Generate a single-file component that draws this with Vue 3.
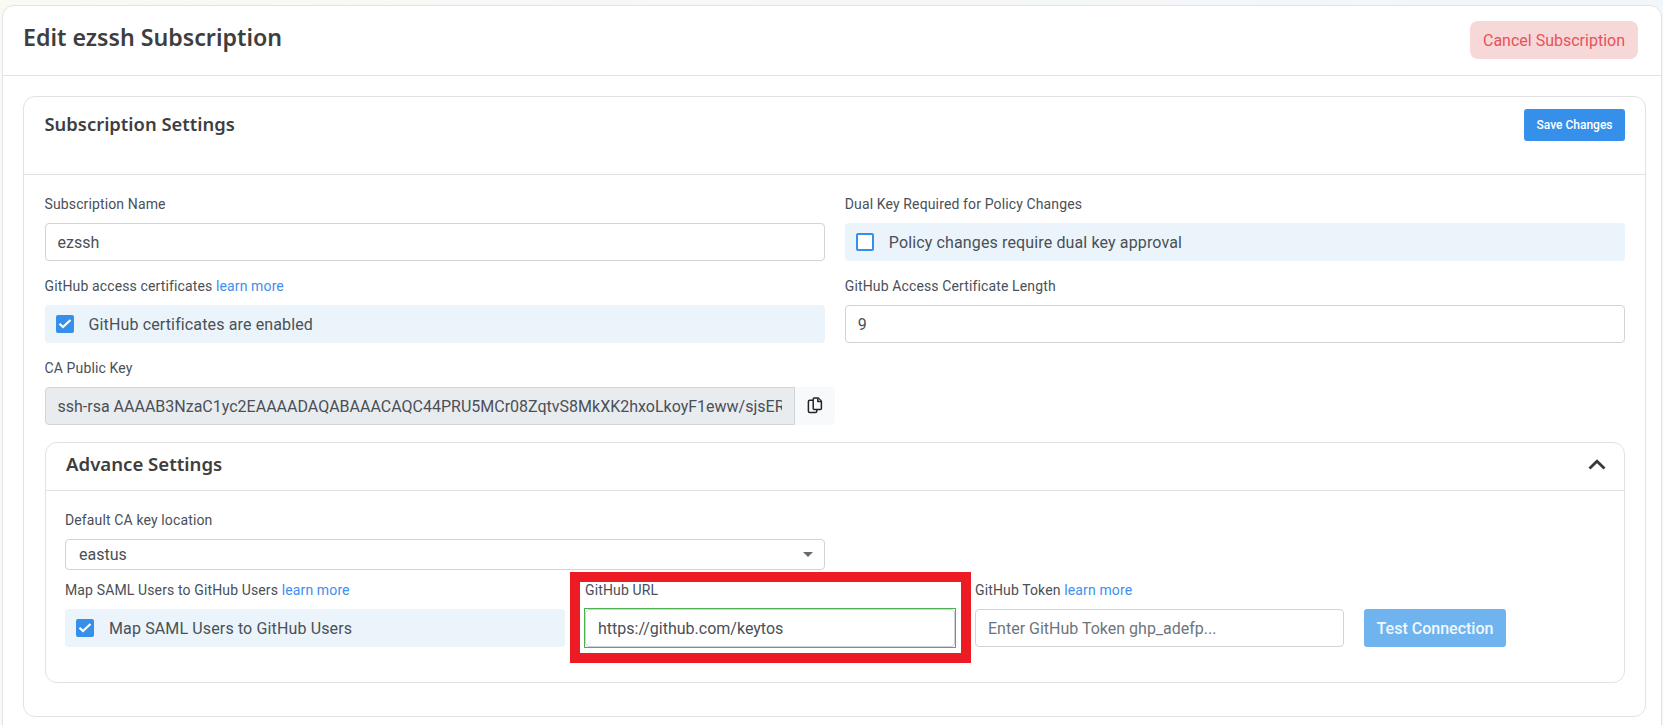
<template>
  <div class="page">
    <div class="outer-card">
      <div class="outer-header">
        <h2>Edit ezssh Subscription</h2>
        <button class="btn-cancel">Cancel Subscription</button>
      </div>
      <div class="outer-body">
        <div class="settings-card">
          <div class="settings-header">
            <h3>Subscription Settings</h3>
            <button class="btn-save">Save Changes</button>
          </div>
          <div class="settings-body">
            <div class="form-grid">
              <div class="field">
                <label>Subscription Name</label>
                <input class="text-input" type="text" :value="subscriptionName" />
              </div>
              <div class="field">
                <label>Dual Key Required for Policy Changes</label>
                <div class="check-panel">
                  <span class="check"></span>
                  <span>Policy changes require dual key approval</span>
                </div>
              </div>
              <div class="field">
                <label>GitHub access certificates <a href="#">learn more</a></label>
                <div class="check-panel">
                  <span class="check checked">
                    <svg viewBox="0 0 18 18"><path d="M3.5 8.8 7 12 14.5 5" /></svg>
                  </span>
                  <span>GitHub certificates are enabled</span>
                </div>
              </div>
              <div class="field">
                <label>GitHub Access Certificate Length</label>
                <input class="text-input" type="text" value="9" />
              </div>
              <div class="field key-field">
                <label>CA Public Key</label>
                <div class="key-group">
                  <input class="text-input key-input" type="text" readonly :value="publicKey" />
                  <button class="btn-copy" aria-label="Copy">
                    <svg viewBox="0 0 16 18" width="16" height="18">
                      <rect x="1.4" y="3.2" width="8.4" height="12.4" rx="1.4" />
                      <path d="M6.2 2c0-.6.4-1 1-1h4l3.2 3.2v7.4c0 .6-.4 1-1 1H7.2c-.6 0-1-.4-1-1z" />
                      <path d="M10.8 1.2v3.4h3.4" />
                    </svg>
                  </button>
                </div>
              </div>
            </div>

            <div class="advance-card">
              <div class="advance-header">
                <h3>Advance Settings</h3>
                <svg class="chevron" viewBox="0 0 18 11" width="18" height="11"><path d="M1.5 9.4 9 2.2 16.5 9.4" /></svg>
              </div>
              <div class="advance-body">
                <div class="location-field">
                  <label>Default CA key location</label>
                  <div class="select-box">
                    <span>eastus</span>
                    <i class="caret"></i>
                  </div>
                </div>
                <div class="github-row">
                  <div class="field">
                    <label>Map SAML Users to GitHub Users <a href="#">learn more</a></label>
                    <div class="check-panel">
                      <span class="check checked">
                        <svg viewBox="0 0 18 18"><path d="M3.5 8.8 7 12 14.5 5" /></svg>
                      </span>
                      <span>Map SAML Users to GitHub Users</span>
                    </div>
                  </div>
                  <div class="field url-field">
                    <label>GitHub URL</label>
                    <div class="valid-wrap">
                      <input class="text-input" type="text" :value="githubUrl" />
                    </div>
                    <div class="red-box"></div>
                  </div>
                  <div class="field">
                    <label>GitHub Token <a href="#">learn more</a></label>
                    <input class="text-input" type="text" placeholder="Enter GitHub Token ghp_adefp..." />
                  </div>
                  <button class="btn-test">Test Connection</button>
                </div>
              </div>
            </div>
          </div>
        </div>
      </div>
    </div>
  </div>
</template>

<script setup>
const subscriptionName = 'ezssh'
const githubUrl = 'https://github.com/keytos'
const publicKey = 'ssh-rsa AAAAB3NzaC1yc2EAAAADAQABAAACAQC44PRU5MCr08ZqtvS8MkXK2hxoLkoyF1eww/sjsERq7vXn2mPcT0dY'
</script>

<style>
html, body {
  margin: 0;
  height: 100%;
  overflow: hidden;
  background: #fff;
}
</style>

<style scoped>
.page {
  width: 1663px;
  height: 725px;
  overflow: hidden;
  box-sizing: border-box;
  padding: 5px 0 0 2px;
  background: linear-gradient(90deg, #faf9f3 0%, #f5f7f8 60%, #f1f6fb 100%);
  font-family: Roboto, "Liberation Sans", sans-serif;
  font-size: 16px;
  color: #495057;
}
.outer-card {
  width: 1660px;
  height: 760px;
  box-sizing: border-box;
  background: #fff;
  border: 1px solid #e2e2e2;
  border-radius: 12px;
}
.outer-header {
  display: flex;
  justify-content: space-between;
  align-items: flex-start;
  box-sizing: border-box;
  height: 70px;
  padding: 15px 23px 0 20px;
  border-bottom: 1px solid #e2e2e2;
}
h2, h3 {
  margin: 0;
  font-family: "Noto Sans", sans-serif;
  font-weight: 600;
  color: #3e3e3e;
}
h2 {
  font-size: 23.2px;
  line-height: 30px;
  margin-top: 1px;
}
h3 {
  font-size: 18.4px;
  line-height: 24px;
}
button {
  font-family: inherit;
  border: none;
}
.btn-cancel {
  width: 168px;
  height: 38px;
  padding: 0;
  font-size: 16px;
  color: #e8505b;
  background: #f6d8d9;
  border-radius: 8px;
}
.outer-body {
  padding: 20px 15px 0 20px;
}
.settings-card {
  background: #fff;
  border: 1px solid #e2e2e2;
  border-radius: 12px;
}
.settings-header {
  display: flex;
  justify-content: space-between;
  align-items: flex-start;
  height: 65px;
  padding: 12px 20px 0 20.5px;
  border-bottom: 1px solid #e2e2e2;
}
.settings-header h3 {
  margin-top: 3px;
}
.btn-save {
  width: 101px;
  height: 32px;
  padding: 0;
  font-size: 12px;
  font-weight: 500;
  color: #fff;
  background: #368fe9;
  border-radius: 3px;
}
.settings-body {
  padding: 19px 20px 33px 20.5px;
}
.form-grid {
  display: grid;
  grid-template-columns: 1fr 1fr;
  column-gap: 20px;
  row-gap: 15px;
}
.field {
  position: relative;
  min-width: 0;
}
label {
  display: block;
  height: 21px;
  margin-bottom: 8px;
  font-size: 14px;
  line-height: 21px;
  letter-spacing: 0.13px;
  color: #495057;
}
a {
  color: #3f8ef0;
  text-decoration: none;
}
.text-input {
  display: block;
  width: 100%;
  height: 38px;
  box-sizing: border-box;
  padding: 0 12px;
  font-family: inherit;
  font-size: 16px;
  color: #495057;
  background: #fff;
  border: 1px solid #ced4da;
  border-radius: 4px;
  outline: none;
}
.text-input::placeholder {
  color: #6c757d;
  opacity: 1;
}
.valid-wrap {
  outline: 1px solid #4caf50;
}
.check-panel {
  display: flex;
  align-items: center;
  gap: 15px;
  height: 38px;
  padding-left: 11px;
  letter-spacing: 0.135px;
  background: #ebf4fb;
  border-radius: 4px;
}
.check {
  display: block;
  width: 18px;
  height: 18px;
  box-sizing: border-box;
  background: #fff;
  border: 2px solid #368fe9;
  border-radius: 2px;
}
.check.checked {
  background: #368fe9;
  border: none;
}
.check svg {
  display: block;
  width: 18px;
  height: 18px;
}
.check path {
  fill: none;
  stroke: #fff;
  stroke-width: 2.2;
}
.key-group {
  display: flex;
  width: 790px;
}
.key-input {
  width: 750px;
  flex: none;
  background: #e9ecef;
  border-radius: 4px 0 0 4px;
}
.btn-copy {
  display: flex;
  align-items: center;
  justify-content: center;
  width: 40px;
  height: 38px;
  padding: 0;
  background: #f8f9fa;
  border-radius: 0 4px 4px 0;
}
.btn-copy path,
.btn-copy rect {
  fill: #f8f9fa;
  stroke: #212529;
  stroke-width: 1.5;
  stroke-linejoin: round;
}
.advance-card {
  margin-top: 17px;
  border: 1px solid #e2e2e2;
  border-radius: 12px;
}
.advance-header {
  display: flex;
  justify-content: space-between;
  align-items: center;
  height: 42px;
  padding: 0 18px 5px 20.5px;
  border-bottom: 1px solid #e2e2e2;
}
.advance-header h3 {
  font-size: 18.6px;
}
.chevron path {
  fill: none;
  stroke: #343a40;
  stroke-width: 2.8;
}
.advance-body {
  padding: 19px 19px 35px 19.5px;
}
.location-field {
  width: 760px;
}
.select-box {
  display: flex;
  justify-content: space-between;
  align-items: center;
  height: 31px;
  box-sizing: border-box;
  padding: 0 11px 0 13px;
  font-size: 16px;
  border: 1px solid #ced4da;
  border-radius: 4px;
}
.caret {
  width: 0;
  height: 0;
  border-left: 5px solid transparent;
  border-right: 5px solid transparent;
  border-top: 5px solid #6c6c6c;
}
.github-row {
  display: grid;
  grid-template-columns: 500px 370px 369px 142px;
  column-gap: 20px;
  align-items: end;
  margin-top: 10px;
}
.red-box {
  position: absolute;
  top: -8px;
  left: -15px;
  right: -16px;
  bottom: -16px;
  border: 10px solid #ed1c24;
  pointer-events: none;
}
.btn-test {
  height: 38px;
  padding: 0;
  font-size: 16px;
  font-weight: 500;
  color: #f1f7fd;
  background: #6fb4ef;
  border-radius: 3px;
}
</style>
